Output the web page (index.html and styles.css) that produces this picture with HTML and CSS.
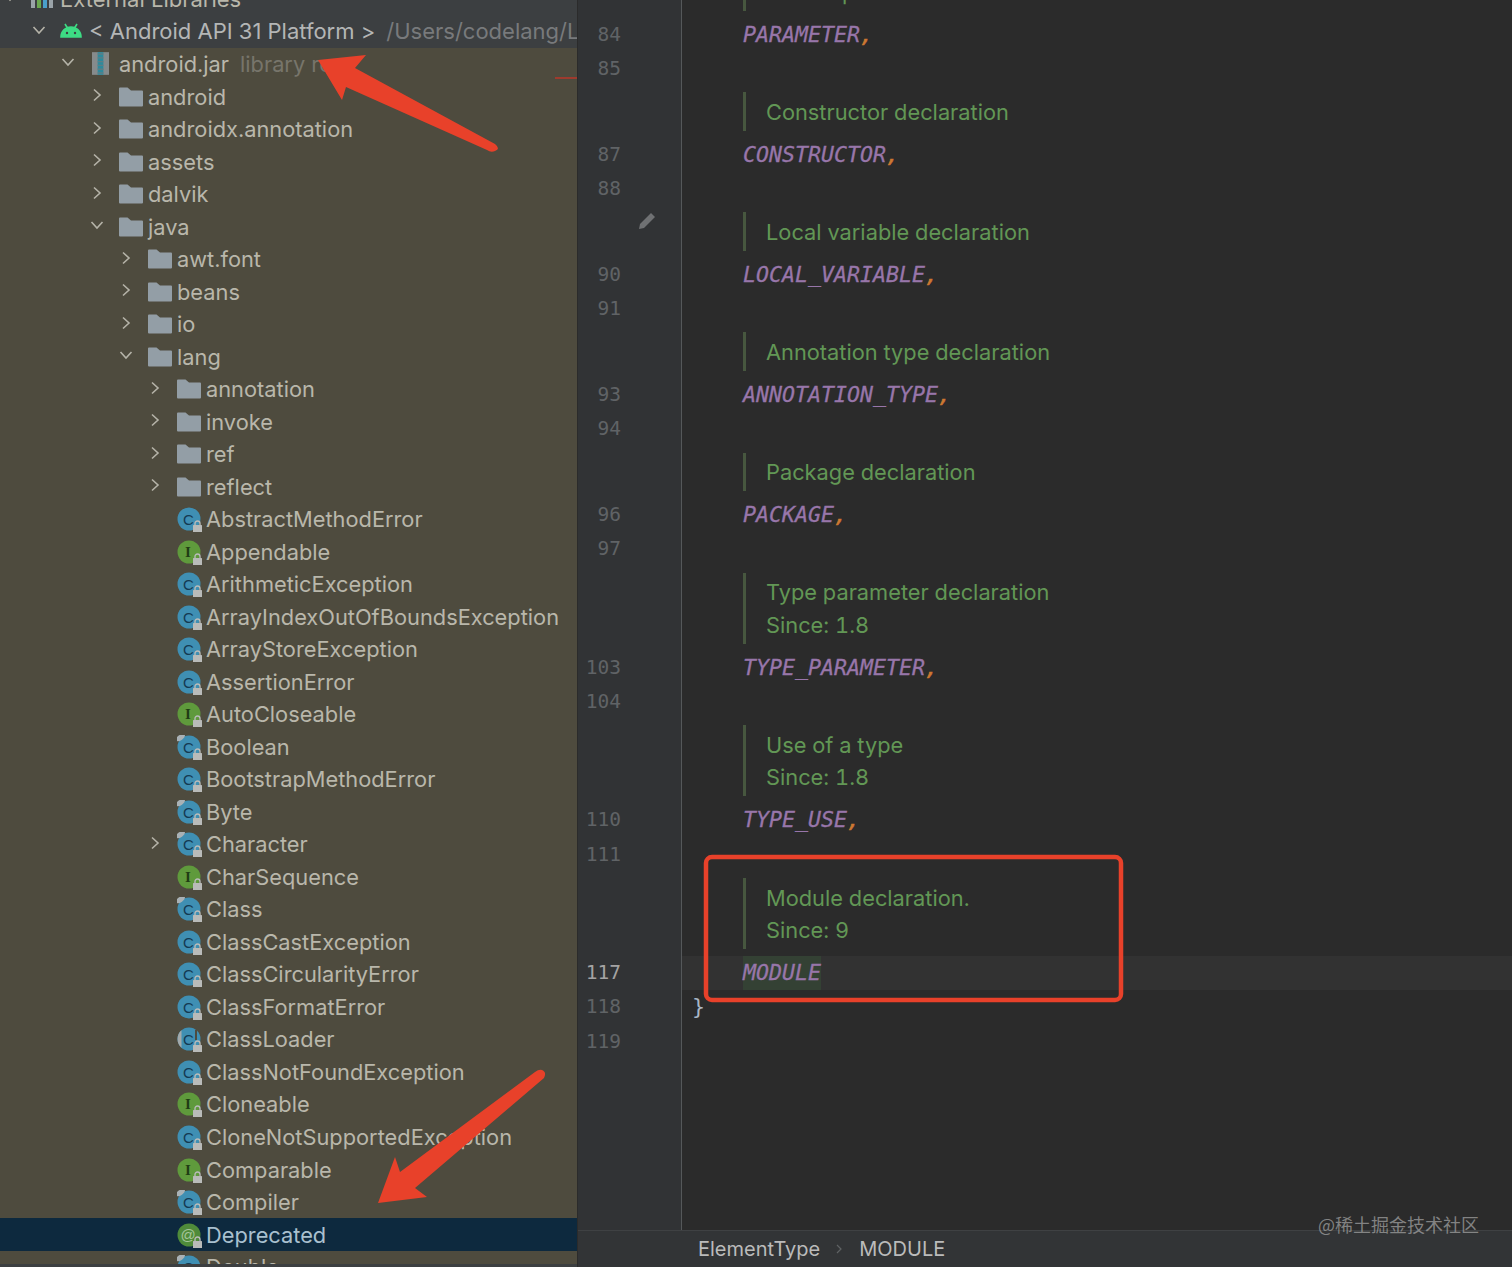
FILE: index.html
```html
<!DOCTYPE html>
<html lang="zh-CN">
<head>
    <meta charset="UTF-8">
    <title>ElementType</title>
    <link rel="stylesheet" href="styles.css">
</head>
<body>
    <svg class="defs" width="0" height="0">
        <defs>
            <symbol id="folder" viewBox="0 0 24 20"><path d="M1 0.5h7.5l3.5 3h11a1 1 0 0 1 1 1v14a1 1 0 0 1-1 1H1a1 1 0 0 1-1-1v-17a1 1 0 0 1 1-1z" fill="#939ea6"/></symbol>
            <symbol id="lock" viewBox="0 0 10 12"><path d="M2.5 5V3.5a2.5 2.5 0 0 1 5 0V5" fill="none" stroke="#b9bbb9" stroke-width="1.4"/><rect x="0.5" y="5" width="9" height="7" rx="0.6" fill="#b9bbb9"/></symbol>
            <symbol id="cls" viewBox="0 0 28 28">
                <circle cx="12" cy="12" r="11.5" fill="#3f8fb3"/>
                <text x="11.5" y="17.5" class="icon-letter" fill="#143a52">C</text>
                <use href="#lock" x="15.5" y="13" width="10" height="12"/>
            </symbol>
            <symbol id="cls-static" viewBox="0 0 28 28">
                <circle cx="12" cy="12" r="11.5" fill="#3f8fb3"/>
                <ellipse cx="3.5" cy="2.5" rx="5" ry="2.6" transform="rotate(-35 3.5 2.5)" fill="#a9b1b5"/>
                <text x="11.5" y="17.5" class="icon-letter" fill="#143a52">C</text>
                <use href="#lock" x="15.5" y="13" width="10" height="12"/>
            </symbol>
            <symbol id="cls-abstract" viewBox="0 0 28 28">
                <circle cx="12" cy="12" r="11.5" fill="#3f8fb3"/>
                <path d="M0.5 12a11.5 11.5 0 0 1 4-8.7v17.4a11.5 11.5 0 0 1-4-8.7z" fill="#a3a9aa"/>
                <rect x="18" y="3" width="2" height="10" fill="#4e4b3e"/>
                <text x="11.5" y="17.5" class="icon-letter" fill="#143a52">C</text>
                <use href="#lock" x="15.5" y="13" width="10" height="12"/>
            </symbol>
            <symbol id="iface" viewBox="0 0 28 28">
                <circle cx="12" cy="12" r="11.5" fill="#5f9a3c"/>
                <text x="11" y="17" class="icon-letter icon-serif" fill="#1f3d14">I</text>
                <use href="#lock" x="15.5" y="13" width="10" height="12"/>
            </symbol>
            <symbol id="anno" viewBox="0 0 28 28">
                <circle cx="12" cy="12" r="11.5" fill="#4f8b3a"/>
                <text x="11" y="17" class="icon-letter" fill="#a5c59a">@</text>
                <use href="#lock" x="15.5" y="13" width="10" height="12"/>
            </symbol>
            <symbol id="open" viewBox="0 0 14 14"><path d="M1.5 4l5.5 6 5.5-6" fill="none" stroke="#b5b3a8" stroke-width="1.6"/></symbol>
            <symbol id="closed" viewBox="0 0 14 14"><path d="M4 1.5l6 5.5-6 5.5" fill="none" stroke="#b5b3a8" stroke-width="1.6"/></symbol>
        </defs>
    </svg>

    <div class="window">
        <aside class="sidebar">
            <div class="tree">
                <div class="row top d0"><svg class="chev"><use href="#open"/></svg>
                    <svg class="icon" viewBox="0 0 24 20"><path d="M1 3h4v16H1z" fill="#9aa3a8"/><path d="M7 3h4v16H7z" fill="#6aa84f"/><path d="M13 3h4v16h-4z" fill="#4a9fc9"/><path d="M19 3h4v16h-4z" fill="#9aa3a8"/></svg><span>External Libraries</span></div>
                <div class="row top d1"><svg class="chev"><use href="#open"/></svg>
                    <svg class="icon" viewBox="0 0 24 20"><path d="M2 16a10 10 0 0 1 20 0zM6 3l3 5M18 3l-3 5" fill="#3ddc84" stroke="#3ddc84" stroke-width="1.6"/><circle cx="8" cy="12" r="1.2" fill="#3c3f41"/><circle cx="16" cy="12" r="1.2" fill="#3c3f41"/></svg><span class="plain">&lt; Android API 31 Platform &gt;</span><span class="hint path">/Users/codelang/Library/Android/sdk</span></div>
                <div class="row d2"><svg class="chev"><use href="#open"/></svg>
                    <svg class="icon icon-jar" viewBox="0 0 18 24"><rect width="18" height="24" fill="#868b8c"/><rect x="6" width="6" height="24" fill="#2f8a9c"/><path d="M6 2h6M6 6h6M6 10h6M6 14h6M6 18h6M6 22h6" stroke="#5c7f86" stroke-width="1.5"/></svg><span>android.jar</span><span class="hint">library root</span></div>
                <div class="row d3"><svg class="chev"><use href="#closed"/></svg><svg class="icon icon-folder"><use href="#folder"/></svg><span>android</span></div>
                <div class="row d3"><svg class="chev"><use href="#closed"/></svg><svg class="icon icon-folder"><use href="#folder"/></svg><span>androidx.annotation</span></div>
                <div class="row d3"><svg class="chev"><use href="#closed"/></svg><svg class="icon icon-folder"><use href="#folder"/></svg><span>assets</span></div>
                <div class="row d3"><svg class="chev"><use href="#closed"/></svg><svg class="icon icon-folder"><use href="#folder"/></svg><span>dalvik</span></div>
                <div class="row d3"><svg class="chev"><use href="#open"/></svg><svg class="icon icon-folder"><use href="#folder"/></svg><span>java</span></div>
                <div class="row d4"><svg class="chev"><use href="#closed"/></svg><svg class="icon icon-folder"><use href="#folder"/></svg><span>awt.font</span></div>
                <div class="row d4"><svg class="chev"><use href="#closed"/></svg><svg class="icon icon-folder"><use href="#folder"/></svg><span>beans</span></div>
                <div class="row d4"><svg class="chev"><use href="#closed"/></svg><svg class="icon icon-folder"><use href="#folder"/></svg><span>io</span></div>
                <div class="row d4"><svg class="chev"><use href="#open"/></svg><svg class="icon icon-folder"><use href="#folder"/></svg><span>lang</span></div>
                <div class="row d5"><svg class="chev"><use href="#closed"/></svg><svg class="icon icon-folder"><use href="#folder"/></svg><span>annotation</span></div>
                <div class="row d5"><svg class="chev"><use href="#closed"/></svg><svg class="icon icon-folder"><use href="#folder"/></svg><span>invoke</span></div>
                <div class="row d5"><svg class="chev"><use href="#closed"/></svg><svg class="icon icon-folder"><use href="#folder"/></svg><span>ref</span></div>
                <div class="row d5"><svg class="chev"><use href="#closed"/></svg><svg class="icon icon-folder"><use href="#folder"/></svg><span>reflect</span></div>
                <div class="row d5"><i class="chev"></i><svg class="icon icon-class"><use href="#cls"/></svg><span>AbstractMethodError</span></div>
                <div class="row d5"><i class="chev"></i><svg class="icon icon-class"><use href="#iface"/></svg><span>Appendable</span></div>
                <div class="row d5"><i class="chev"></i><svg class="icon icon-class"><use href="#cls"/></svg><span>ArithmeticException</span></div>
                <div class="row d5"><i class="chev"></i><svg class="icon icon-class"><use href="#cls"/></svg><span>ArrayIndexOutOfBoundsException</span></div>
                <div class="row d5"><i class="chev"></i><svg class="icon icon-class"><use href="#cls"/></svg><span>ArrayStoreException</span></div>
                <div class="row d5"><i class="chev"></i><svg class="icon icon-class"><use href="#cls"/></svg><span>AssertionError</span></div>
                <div class="row d5"><i class="chev"></i><svg class="icon icon-class"><use href="#iface"/></svg><span>AutoCloseable</span></div>
                <div class="row d5"><i class="chev"></i><svg class="icon icon-class"><use href="#cls-static"/></svg><span>Boolean</span></div>
                <div class="row d5"><i class="chev"></i><svg class="icon icon-class"><use href="#cls"/></svg><span>BootstrapMethodError</span></div>
                <div class="row d5"><i class="chev"></i><svg class="icon icon-class"><use href="#cls-static"/></svg><span>Byte</span></div>
                <div class="row d5"><svg class="chev"><use href="#closed"/></svg><svg class="icon icon-class"><use href="#cls-static"/></svg><span>Character</span></div>
                <div class="row d5"><i class="chev"></i><svg class="icon icon-class"><use href="#iface"/></svg><span>CharSequence</span></div>
                <div class="row d5"><i class="chev"></i><svg class="icon icon-class"><use href="#cls-static"/></svg><span>Class</span></div>
                <div class="row d5"><i class="chev"></i><svg class="icon icon-class"><use href="#cls"/></svg><span>ClassCastException</span></div>
                <div class="row d5"><i class="chev"></i><svg class="icon icon-class"><use href="#cls"/></svg><span>ClassCircularityError</span></div>
                <div class="row d5"><i class="chev"></i><svg class="icon icon-class"><use href="#cls"/></svg><span>ClassFormatError</span></div>
                <div class="row d5"><i class="chev"></i><svg class="icon icon-class"><use href="#cls-abstract"/></svg><span>ClassLoader</span></div>
                <div class="row d5"><i class="chev"></i><svg class="icon icon-class"><use href="#cls"/></svg><span>ClassNotFoundException</span></div>
                <div class="row d5"><i class="chev"></i><svg class="icon icon-class"><use href="#iface"/></svg><span>Cloneable</span></div>
                <div class="row d5"><i class="chev"></i><svg class="icon icon-class"><use href="#cls"/></svg><span>CloneNotSupportedException</span></div>
                <div class="row d5"><i class="chev"></i><svg class="icon icon-class"><use href="#iface"/></svg><span>Comparable</span></div>
                <div class="row d5"><i class="chev"></i><svg class="icon icon-class"><use href="#cls-static"/></svg><span>Compiler</span></div>
                <div class="row d5 selected"><i class="chev"></i><svg class="icon icon-class"><use href="#anno"/></svg><span>Deprecated</span></div>
                <div class="row d5"><i class="chev"></i><svg class="icon icon-class"><use href="#cls-static"/></svg><span>Double</span></div>
            </div>
            <div class="tree-end"></div>
            <i class="error-mark"></i>
        </aside>

        <main class="editor">
            <div class="code">
                <div class="line doc first"><b class="num"></b><div class="body"><div class="doc-block">Formal parameter declaration</div></div></div>
                <div class="line"><b class="num">84</b><div class="body"><em>PARAMETER</em><u>,</u></div></div>
                <div class="line"><b class="num">85</b><div class="body"></div></div>
                <div class="line doc"><b class="num"></b><div class="body"><div class="doc-block">Constructor declaration</div></div></div>
                <div class="line"><b class="num">87</b><div class="body"><em>CONSTRUCTOR</em><u>,</u></div></div>
                <div class="line"><b class="num">88</b><div class="body"></div></div>
                <div class="line doc"><b class="num"></b><div class="body"><div class="doc-block">Local variable declaration</div></div></div>
                <div class="line"><b class="num">90</b><div class="body"><em>LOCAL_VARIABLE</em><u>,</u></div></div>
                <div class="line"><b class="num">91</b><div class="body"></div></div>
                <div class="line doc"><b class="num"></b><div class="body"><div class="doc-block">Annotation type declaration</div></div></div>
                <div class="line"><b class="num">93</b><div class="body"><em>ANNOTATION_TYPE</em><u>,</u></div></div>
                <div class="line"><b class="num">94</b><div class="body"></div></div>
                <div class="line doc"><b class="num"></b><div class="body"><div class="doc-block">Package declaration</div></div></div>
                <div class="line"><b class="num">96</b><div class="body"><em>PACKAGE</em><u>,</u></div></div>
                <div class="line"><b class="num">97</b><div class="body"></div></div>
                <div class="line doc"><b class="num"></b><div class="body"><div class="doc-block">Type parameter declaration<br>Since: 1.8</div></div></div>
                <div class="line"><b class="num">103</b><div class="body"><em>TYPE_PARAMETER</em><u>,</u></div></div>
                <div class="line"><b class="num">104</b><div class="body"></div></div>
                <div class="line doc"><b class="num"></b><div class="body"><div class="doc-block">Use of a type<br>Since: 1.8</div></div></div>
                <div class="line"><b class="num">110</b><div class="body"><em>TYPE_USE</em><u>,</u></div></div>
                <div class="line"><b class="num">111</b><div class="body"></div></div>
                <div class="line doc"><b class="num"></b><div class="body"><div class="doc-block">Module declaration.<br>Since: 9</div></div></div>
                <div class="line current"><b class="num">117</b><div class="body"><em class="found">MODULE</em></div></div>
                <div class="line"><b class="num">118</b><div class="body brace">}</div></div>
                <div class="line"><b class="num">119</b><div class="body"></div></div>
                <div class="line fill"><b class="num"></b><div class="body"></div></div>
            </div>
            <footer class="crumbs"><span>ElementType</span>
                <svg class="crumb-sep" viewBox="0 0 8 12"><path d="M2 2l4 4-4 4" fill="none" stroke="#5f6264" stroke-width="1.2"/></svg><span>MODULE</span></footer>
            <svg class="pencil" viewBox="0 0 18 18"><path d="M13 1l4 4L6 16l-5 1 1-5z" fill="#6f7173"/></svg>
        </main>
    </div>

    <!-- annotations on top of the screenshot -->
    <svg class="marks" viewBox="0 0 1512 1267">
        <path class="mark" d="M318 60L366 55 355 68 495 144Q501 149 495 151 491 153 487 150L346 87 342 100z"/>
        <path class="mark" d="M378 1203L427 1197 415 1188 544 1078Q547 1072 542 1070 539 1069 535 1072L400 1172 395 1157z"/>
        <rect class="mark-box" x="706" y="857" width="415" height="143" rx="6"/>
    </svg>
    <div class="watermark">@稀土掘金技术社区</div>
</body>
</html>
```

FILE: styles.css
```css
* { box-sizing: border-box; }
html, body { margin: 0; height: 100%; overflow: hidden; }
body {
    background-color: #2b2b2b;
    font-family: Inter, "Noto Sans", sans-serif;
}
.defs { position: absolute; }
.window { display: flex; height: 1267px; }

/* project tree */
.sidebar {
    position: relative;
    display: flex;
    flex-direction: column;
    width: 578px;
    flex: none;
    overflow: hidden;
    background-color: #4e4b3e;
    border-right: 1px solid #2b2b2b;
}
.tree { flex: 1; min-height: 0; overflow: hidden; margin-top: -17.3px; }
.tree-end { height: 3px; flex: none; background-color: #3c3f41; }
.row {
    display: flex;
    align-items: center;
    height: 32.53px;
    color: #b9b7ab;
    font-size: 21.8px;
    white-space: nowrap;
}
.row.top { background-color: #3c3f41; font-size: 22px; }
.row.selected { background-color: #0d293e; color: #a9c0cf; }
.d0 { padding-left: 3px; }
.d1 { padding-left: 32px; }
.d2 { padding-left: 61px; }
.d3 { padding-left: 90px; }
.d4 { padding-left: 119px; }
.d5 { padding-left: 148px; }
.chev { width: 14px; height: 14px; margin: 0 15px 3px 0; flex: none; }
.top .chev { margin-right: 13px; }
.icon { width: 24px; height: 20px; margin-right: 5px; flex: none; }
.top .icon { margin-right: 6px; }
.icon-jar { width: 17px; height: 23px; margin: 0 10px 0 2px; }
.icon-class { width: 28px; height: 28px; margin: 4px 1px 0 0; }
.icon-letter { font-family: "Liberation Sans", sans-serif; font-size: 15px; text-anchor: middle; }
.icon-serif { font-family: "Liberation Serif", serif; font-weight: bold; }
.plain { color: #b4b6b6; }
.hint { margin-left: 11px; color: #77756b; }
.hint.path { color: #787a7c; }
.error-mark { position: absolute; left: 555px; top: 77px; width: 22px; height: 2px; background-color: #9e3b2e; }

/* editor */
.editor { position: relative; flex: 1; display: flex; flex-direction: column; min-width: 0; }
.code { flex: 1; min-height: 0; overflow: hidden; }
.line { display: flex; height: 34.33px; }
.line.doc { height: auto; }
.line.first { margin-top: -34px; }
.line.fill { height: 400px; }
.num {
    width: 104px;
    flex: none;
    padding-right: 60px;
    background-color: #313335;
    border-right: 1px solid #55585a;
    text-align: right;
    color: #606366;
    font: normal 19.5px/34.33px "DejaVu Sans Mono", monospace;
}
.body {
    flex: 1;
    padding-left: 61px;
    font: italic 21.6px/34.33px "DejaVu Sans Mono", monospace;
}
.body em { color: #9876aa; font-style: italic; -webkit-text-stroke: 0.3px #9876aa; }
.body u { color: #cc7832; text-decoration: none; -webkit-text-stroke: 0.6px #cc7832; }
.brace { padding-left: 10px; color: #a9b7c6; font-style: normal; }
.current .body { background-color: #323232; }
.current .num { color: #a4a3a3; }
.found { display: inline-block; background-color: #344134; }
.doc-block {
    margin: 6px 0 7px;
    padding: 3.5px 0 2.5px 20px;
    border-left: 3px solid #47573f;
    color: #629755;
    font: normal 21.8px/32.5px Inter, "Noto Sans", sans-serif;
    font-variant-numeric: tabular-nums;
}
.pencil { position: absolute; left: 60px; top: 212px; width: 18px; height: 18px; }
.crumbs {
    display: flex;
    align-items: center;
    height: 37px;
    flex: none;
    padding-left: 120px;
    background-color: #323436;
    border-top: 1px solid #3f4143;
    color: #bbbbbb;
    font-size: 20px;
}
.crumb-sep { width: 8px; height: 12px; margin: 0 16px 0 15px; }

/* overlays */
.marks { position: absolute; left: 0; top: 0; width: 1512px; height: 1267px; pointer-events: none; }
.mark { fill: #e8412a; }
.mark-box { fill: none; stroke: #e8412a; stroke-width: 4.5; }
.watermark {
    position: absolute;
    left: 1318px;
    top: 1211px;
    color: rgba(160, 160, 160, 0.75);
    font: 18px/26px "Noto Sans CJK SC", sans-serif;
}
```
